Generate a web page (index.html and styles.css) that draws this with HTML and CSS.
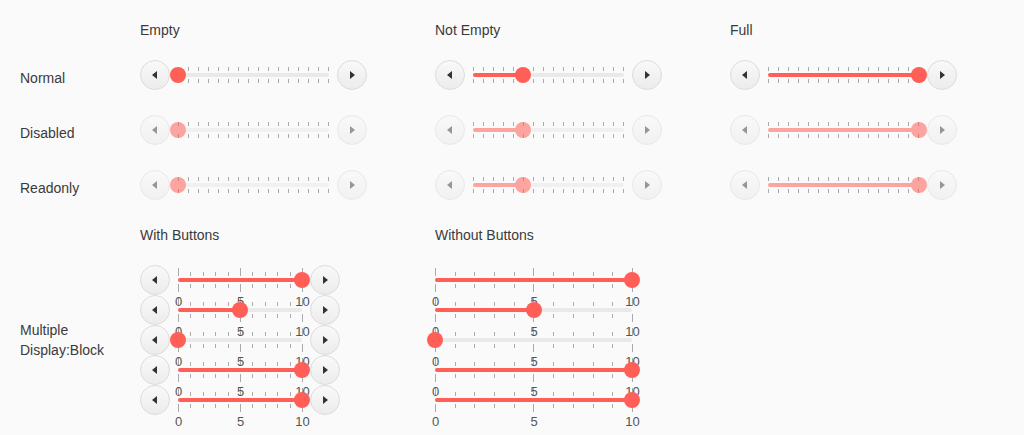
FILE: index.html
```html
<!DOCTYPE html>
<html>
<head>
<meta charset="utf-8">
<link rel="stylesheet" href="styles.css">
</head>
<body>
<div class="page">
  <section class="sec sec-top">
    <div class="grid head">
      <div></div><div class="h">Empty</div><div class="h">Not Empty</div><div class="h">Full</div>
    </div>
    <div class="grid body">
      <div class="lbl">Normal</div>
      <div class="slider"><button class="sbtn"><span class="arr l"></span></button><div class="ta"><div class="tk"></div><div class="track"><div class="fill" style="width:0%"></div><div class="thumb" style="left:0%"></div></div><div class="tk"></div></div><button class="sbtn"><span class="arr r"></span></button></div>
      <div class="slider"><button class="sbtn"><span class="arr l"></span></button><div class="ta"><div class="tk"></div><div class="track"><div class="fill" style="width:33.333%"></div><div class="thumb" style="left:33.333%"></div></div><div class="tk"></div></div><button class="sbtn"><span class="arr r"></span></button></div>
      <div class="slider"><button class="sbtn"><span class="arr l"></span></button><div class="ta"><div class="tk"></div><div class="track"><div class="fill" style="width:100%"></div><div class="thumb" style="left:100%"></div></div><div class="tk"></div></div><button class="sbtn"><span class="arr r"></span></button></div>

      <div class="lbl">Disabled</div>
      <div class="slider off"><button class="sbtn"><span class="arr l"></span></button><div class="ta"><div class="tk"></div><div class="track"><div class="fill" style="width:0%"></div><div class="thumb" style="left:0%"></div></div><div class="tk"></div></div><button class="sbtn"><span class="arr r"></span></button></div>
      <div class="slider off"><button class="sbtn"><span class="arr l"></span></button><div class="ta"><div class="tk"></div><div class="track"><div class="fill" style="width:33.333%"></div><div class="thumb" style="left:33.333%"></div></div><div class="tk"></div></div><button class="sbtn"><span class="arr r"></span></button></div>
      <div class="slider off"><button class="sbtn"><span class="arr l"></span></button><div class="ta"><div class="tk"></div><div class="track"><div class="fill" style="width:100%"></div><div class="thumb" style="left:100%"></div></div><div class="tk"></div></div><button class="sbtn"><span class="arr r"></span></button></div>

      <div class="lbl">Readonly</div>
      <div class="slider off"><button class="sbtn"><span class="arr l"></span></button><div class="ta"><div class="tk"></div><div class="track"><div class="fill" style="width:0%"></div><div class="thumb" style="left:0%"></div></div><div class="tk"></div></div><button class="sbtn"><span class="arr r"></span></button></div>
      <div class="slider off"><button class="sbtn"><span class="arr l"></span></button><div class="ta"><div class="tk"></div><div class="track"><div class="fill" style="width:33.333%"></div><div class="thumb" style="left:33.333%"></div></div><div class="tk"></div></div><button class="sbtn"><span class="arr r"></span></button></div>
      <div class="slider off"><button class="sbtn"><span class="arr l"></span></button><div class="ta"><div class="tk"></div><div class="track"><div class="fill" style="width:100%"></div><div class="thumb" style="left:100%"></div></div><div class="tk"></div></div><button class="sbtn"><span class="arr r"></span></button></div>
    </div>
  </section>

  <section class="sec sec-bottom">
    <div class="grid head">
      <div></div><div class="h">With Buttons</div><div class="h">Without Buttons</div>
    </div>
    <div class="grid body">
      <div class="lbl multi-lbl">Multiple<br>Display:Block</div>
      <div class="stack">
        <div class="slider ms wb"><button class="sbtn"><span class="arr l"></span></button><div class="ta"><div class="mt top"><i class="M"></i><i></i><i></i><i></i><i></i><i class="M"></i><i></i><i></i><i></i><i></i><i class="M"></i></div><div class="track"><div class="fill" style="width:100%"></div><div class="thumb" style="left:100%"></div></div><div class="mt bot"><i class="M"></i><i></i><i></i><i></i><i></i><i class="M"></i><i></i><i></i><i></i><i></i><i class="M"></i></div><div class="nums"><span class="n0">0</span><span class="n5">5</span><span class="n10">10</span></div></div><button class="sbtn"><span class="arr r"></span></button></div>
        <div class="slider ms wb"><button class="sbtn"><span class="arr l"></span></button><div class="ta"><div class="mt top"><i class="M"></i><i></i><i></i><i></i><i></i><i class="M"></i><i></i><i></i><i></i><i></i><i class="M"></i></div><div class="track"><div class="fill" style="width:50%"></div><div class="thumb" style="left:50%"></div></div><div class="mt bot"><i class="M"></i><i></i><i></i><i></i><i></i><i class="M"></i><i></i><i></i><i></i><i></i><i class="M"></i></div><div class="nums"><span class="n0">0</span><span class="n5">5</span><span class="n10">10</span></div></div><button class="sbtn"><span class="arr r"></span></button></div>
        <div class="slider ms wb"><button class="sbtn"><span class="arr l"></span></button><div class="ta"><div class="mt top"><i class="M"></i><i></i><i></i><i></i><i></i><i class="M"></i><i></i><i></i><i></i><i></i><i class="M"></i></div><div class="track"><div class="fill" style="width:0%"></div><div class="thumb" style="left:0%"></div></div><div class="mt bot"><i class="M"></i><i></i><i></i><i></i><i></i><i class="M"></i><i></i><i></i><i></i><i></i><i class="M"></i></div><div class="nums"><span class="n0">0</span><span class="n5">5</span><span class="n10">10</span></div></div><button class="sbtn"><span class="arr r"></span></button></div>
        <div class="slider ms wb"><button class="sbtn"><span class="arr l"></span></button><div class="ta"><div class="mt top"><i class="M"></i><i></i><i></i><i></i><i></i><i class="M"></i><i></i><i></i><i></i><i></i><i class="M"></i></div><div class="track"><div class="fill" style="width:100%"></div><div class="thumb" style="left:100%"></div></div><div class="mt bot"><i class="M"></i><i></i><i></i><i></i><i></i><i class="M"></i><i></i><i></i><i></i><i></i><i class="M"></i></div><div class="nums"><span class="n0">0</span><span class="n5">5</span><span class="n10">10</span></div></div><button class="sbtn"><span class="arr r"></span></button></div>
        <div class="slider ms wb"><button class="sbtn"><span class="arr l"></span></button><div class="ta"><div class="mt top"><i class="M"></i><i></i><i></i><i></i><i></i><i class="M"></i><i></i><i></i><i></i><i></i><i class="M"></i></div><div class="track"><div class="fill" style="width:100%"></div><div class="thumb" style="left:100%"></div></div><div class="mt bot"><i class="M"></i><i></i><i></i><i></i><i></i><i class="M"></i><i></i><i></i><i></i><i></i><i class="M"></i></div><div class="nums"><span class="n0">0</span><span class="n5">5</span><span class="n10">10</span></div></div><button class="sbtn"><span class="arr r"></span></button></div>
      </div>
      <div class="stack">
        <div class="slider ms nb"><div class="ta"><div class="mt top"><i class="M"></i><i></i><i></i><i></i><i></i><i class="M"></i><i></i><i></i><i></i><i></i><i class="M"></i></div><div class="track"><div class="fill" style="width:100%"></div><div class="thumb" style="left:100%"></div></div><div class="mt bot"><i class="M"></i><i></i><i></i><i></i><i></i><i class="M"></i><i></i><i></i><i></i><i></i><i class="M"></i></div><div class="nums"><span class="n0">0</span><span class="n5">5</span><span class="n10">10</span></div></div></div>
        <div class="slider ms nb"><div class="ta"><div class="mt top"><i class="M"></i><i></i><i></i><i></i><i></i><i class="M"></i><i></i><i></i><i></i><i></i><i class="M"></i></div><div class="track"><div class="fill" style="width:50%"></div><div class="thumb" style="left:50%"></div></div><div class="mt bot"><i class="M"></i><i></i><i></i><i></i><i></i><i class="M"></i><i></i><i></i><i></i><i></i><i class="M"></i></div><div class="nums"><span class="n0">0</span><span class="n5">5</span><span class="n10">10</span></div></div></div>
        <div class="slider ms nb"><div class="ta"><div class="mt top"><i class="M"></i><i></i><i></i><i></i><i></i><i class="M"></i><i></i><i></i><i></i><i></i><i class="M"></i></div><div class="track"><div class="fill" style="width:0%"></div><div class="thumb" style="left:0%"></div></div><div class="mt bot"><i class="M"></i><i></i><i></i><i></i><i></i><i class="M"></i><i></i><i></i><i></i><i></i><i class="M"></i></div><div class="nums"><span class="n0">0</span><span class="n5">5</span><span class="n10">10</span></div></div></div>
        <div class="slider ms nb"><div class="ta"><div class="mt top"><i class="M"></i><i></i><i></i><i></i><i></i><i class="M"></i><i></i><i></i><i></i><i></i><i class="M"></i></div><div class="track"><div class="fill" style="width:100%"></div><div class="thumb" style="left:100%"></div></div><div class="mt bot"><i class="M"></i><i></i><i></i><i></i><i></i><i class="M"></i><i></i><i></i><i></i><i></i><i class="M"></i></div><div class="nums"><span class="n0">0</span><span class="n5">5</span><span class="n10">10</span></div></div></div>
        <div class="slider ms nb"><div class="ta"><div class="mt top"><i class="M"></i><i></i><i></i><i></i><i></i><i class="M"></i><i></i><i></i><i></i><i></i><i class="M"></i></div><div class="track"><div class="fill" style="width:100%"></div><div class="thumb" style="left:100%"></div></div><div class="mt bot"><i class="M"></i><i></i><i></i><i></i><i></i><i class="M"></i><i></i><i></i><i></i><i></i><i class="M"></i></div><div class="nums"><span class="n0">0</span><span class="n5">5</span><span class="n10">10</span></div></div></div>
      </div>
    </div>
  </section>
</div>
</body>
</html>
```

FILE: styles.css
```css
* { box-sizing: border-box; }
html, body { margin: 0; padding: 0; }
body {
  background: #fafafa;
  font-family: "Liberation Sans", Arial, sans-serif;
  font-size: 14px;
  color: #3a3a3a;
  width: 1024px;
  height: 435px;
  overflow: hidden;
}
.page { padding: 20px 0 0 20px; }
.sec-bottom { margin-top: 25px; }
.grid {
  display: grid;
  grid-template-columns: 120px 295px 295px 295px;
}
.head { margin-bottom: 20px; }
.h { line-height: 20px; height: 20px; }
.sec-top .body { row-gap: 25px; }
.lbl { line-height: 20px; align-self: center; padding-top: 6px; }
.multi-lbl { padding-top: 0; }

/* slider */
.slider {
  display: flex;
  align-items: center;
  height: 30px;
  width: 226px;
}
.sbtn {
  flex: 0 0 30px;
  width: 30px;
  height: 30px;
  padding: 0;
  margin: 0;
  border-radius: 50%;
  border: 1px solid #dcdcdc;
  background: linear-gradient(#f9f9f9, #ececec);
  display: flex;
  align-items: center;
  justify-content: center;
}
.arr {
  width: 0; height: 0;
  border-top: 4px solid transparent;
  border-bottom: 4px solid transparent;
}
.arr.l { border-right: 5px solid #333; margin-left: -1px; }
.arr.r { border-left: 5px solid #333; margin-left: 1px; }

.ta {
  flex: 1 1 auto;
  height: 30px;
  padding: 0 8px;
  display: flex;
  flex-direction: column;
  justify-content: center;
}
.tk {
  width: 151px;
  height: 4px;
  background: repeating-linear-gradient(to right, #aaa 0 1px, transparent 1px 10px);
}
.track {
  position: relative;
  height: 4px;
  margin: 2px 0;
  border-radius: 2px;
  background: #e9e9e9;
}
.fill {
  height: 4px;
  border-radius: 2px;
  background: #ff5f57;
}
.thumb {
  position: absolute;
  top: 50%;
  width: 16px;
  height: 16px;
  border-radius: 50%;
  background: #ff5f57;
  transform: translate(-50%, -50%);
}
.off .track { opacity: 0.55; }
.off .sbtn { opacity: 0.6; }
.off .arr.l { border-right-color: #555; }
.off .arr.r { border-left-color: #555; }

/* multiple */
.stack { display: flex; flex-direction: column; }
.ms.wb { width: 200px; }
.ms.nb { width: 197px; }
.ms.nb .ta { padding: 0; }
.mt {
  display: flex;
  justify-content: space-between;
  height: 8px;
  margin-right: -1px;
}
.mt.top { align-items: flex-end; }
.mt.bot { align-items: flex-start; }
.mt i { display: block; width: 1px; height: 4px; background: #aaa; }
.mt i.M { height: 8px; }
.nums { position: relative; height: 0; }
.nums span {
  position: absolute;
  top: 2px;
  font-size: 13px;
  line-height: 15px;
  color: #555;
  transform: translateX(-50%);
}
.n0 { left: 0.5px; }
.n5 { left: calc(50% + 0.5px); }
.n10 { left: calc(100% + 0.5px); }
```
